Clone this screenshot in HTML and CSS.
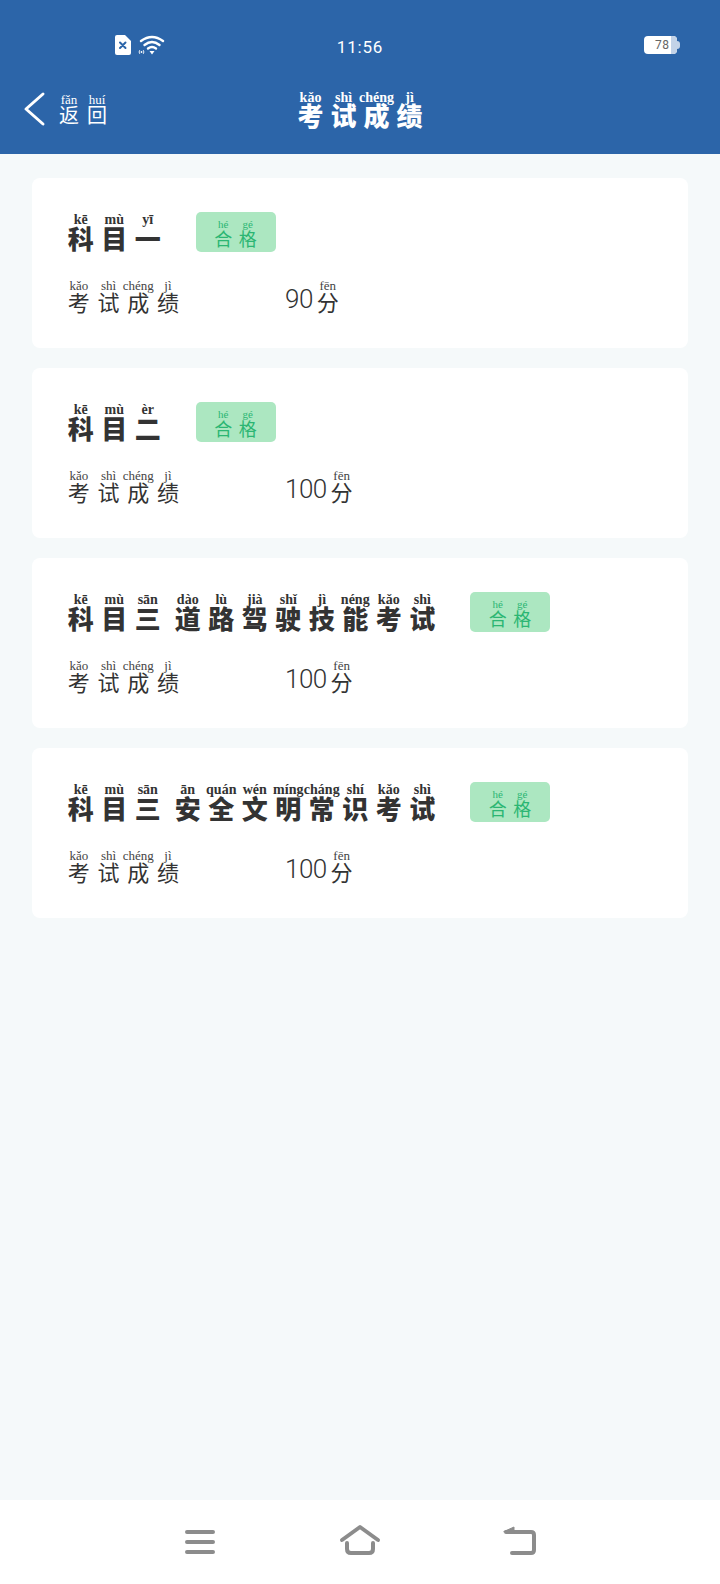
FILE: index.html
```html
<!DOCTYPE html>
<html lang="zh">
<head>
  <meta charset="UTF-8" />
  <meta name="viewport" content="width=device-width, initial-scale=1.0" />
  <title>考试成绩</title>
  <link rel="stylesheet" href="styles.css">
</head>
<body>
  <div class="page">
    <header class="top">
      <div class="status-bar">
        <div class="status-left">
          <svg class="sim-icon" width="18" height="22" viewBox="0 0 18 22">
            <path d="M3 1H11L17 7V19Q17 21 15 21H3Q1 21 1 19V3Q1 1 3 1Z" fill="#fff"/>
            <path d="M6 8.500L11.500 14M11.500 8.500L6 14" stroke="#2c65a9" stroke-width="2" stroke-linecap="round"/>
          </svg>
          <svg class="wifi-icon" width="27" height="20" viewBox="0 0 27 20" fill="none" stroke="#fff" stroke-linecap="round">
            <path d="M3 6Q14 -2 25 6" stroke-width="2.400"/>
            <path d="M6.500 10Q14 4 21.500 10" stroke-width="2.400"/>
            <path d="M10 13.500Q14 10.500 18 13.500" stroke-width="2.400"/>
            <path d="M11.500 16H16.500L14 19.500Z" fill="#fff" stroke="none"/>
            <circle cx="3.500" cy="17" r="0.900" fill="#fff" stroke="none"/>
            <path d="M1.500 15.500Q.5 17 1.500 18.500M5.500 15.500Q6.500 17 5.500 18.500" stroke-width="0.900"/>
          </svg>
        </div>
        <div class="clock">11:56</div>
        <div class="status-right">
          <div class="battery"><span class="battery-num">78</span><span class="battery-end"></span></div>
          <span class="battery-nub"></span>
        </div>
      </div>

      <div class="nav">
        <div class="back">
          <svg class="back-icon" width="24" height="36" viewBox="0 0 24 36" fill="none">
            <path d="M21 3L4 18L21 33" stroke="#fff" stroke-width="3" stroke-linecap="round" stroke-linejoin="round"/>
          </svg>
          <ruby class="ch-back">返<rt>fǎn</rt></ruby><ruby class="ch-back">回<rt>huí</rt></ruby>
        </div>
        <h1 class="nav-title">
          <ruby class="ch-head">考<rt>kǎo</rt></ruby><ruby class="ch-head">试<rt>shì</rt></ruby><ruby class="ch-head">成<rt>chéng</rt></ruby><ruby class="ch-head">绩<rt>jì</rt></ruby>
        </h1>
        <div></div>
      </div>
    </header>

    <main class="list">
      <section class="card">
        <div class="card-head">
          <div class="subject">
            <ruby>科<rt>kē</rt></ruby><ruby>目<rt>mù</rt></ruby><ruby>一<rt>yī</rt></ruby>
          </div>
          <div class="tag"><ruby>合<rt>hé</rt></ruby><ruby>格<rt>gé</rt></ruby></div>
        </div>
        <div class="score-row">
          <div class="score-label"><ruby>考<rt>kǎo</rt></ruby><ruby>试<rt>shì</rt></ruby><ruby>成<rt>chéng</rt></ruby><ruby>绩<rt>jì</rt></ruby></div>
          <div class="score-value"><span class="num">90</span><ruby>分<rt>fēn</rt></ruby></div>
        </div>
      </section>

      <section class="card">
        <div class="card-head">
          <div class="subject">
            <ruby>科<rt>kē</rt></ruby><ruby>目<rt>mù</rt></ruby><ruby>二<rt>èr</rt></ruby>
          </div>
          <div class="tag"><ruby>合<rt>hé</rt></ruby><ruby>格<rt>gé</rt></ruby></div>
        </div>
        <div class="score-row">
          <div class="score-label"><ruby>考<rt>kǎo</rt></ruby><ruby>试<rt>shì</rt></ruby><ruby>成<rt>chéng</rt></ruby><ruby>绩<rt>jì</rt></ruby></div>
          <div class="score-value"><span class="num">100</span><ruby>分<rt>fēn</rt></ruby></div>
        </div>
      </section>

      <section class="card">
        <div class="card-head">
          <div class="subject">
            <ruby>科<rt>kē</rt></ruby><ruby>目<rt>mù</rt></ruby><ruby>三<rt>sān</rt></ruby><ruby class="word-start">道<rt>dào</rt></ruby><ruby>路<rt>lù</rt></ruby><ruby>驾<rt>jià</rt></ruby><ruby>驶<rt>shǐ</rt></ruby><ruby>技<rt>jì</rt></ruby><ruby>能<rt>néng</rt></ruby><ruby>考<rt>kǎo</rt></ruby><ruby>试<rt>shì</rt></ruby>
          </div>
          <div class="tag"><ruby>合<rt>hé</rt></ruby><ruby>格<rt>gé</rt></ruby></div>
        </div>
        <div class="score-row">
          <div class="score-label"><ruby>考<rt>kǎo</rt></ruby><ruby>试<rt>shì</rt></ruby><ruby>成<rt>chéng</rt></ruby><ruby>绩<rt>jì</rt></ruby></div>
          <div class="score-value"><span class="num">100</span><ruby>分<rt>fēn</rt></ruby></div>
        </div>
      </section>

      <section class="card">
        <div class="card-head">
          <div class="subject">
            <ruby>科<rt>kē</rt></ruby><ruby>目<rt>mù</rt></ruby><ruby>三<rt>sān</rt></ruby><ruby class="word-start">安<rt>ān</rt></ruby><ruby>全<rt>quán</rt></ruby><ruby>文<rt>wén</rt></ruby><ruby>明<rt>míng</rt></ruby><ruby>常<rt>cháng</rt></ruby><ruby>识<rt>shí</rt></ruby><ruby>考<rt>kǎo</rt></ruby><ruby>试<rt>shì</rt></ruby>
          </div>
          <div class="tag"><ruby>合<rt>hé</rt></ruby><ruby>格<rt>gé</rt></ruby></div>
        </div>
        <div class="score-row">
          <div class="score-label"><ruby>考<rt>kǎo</rt></ruby><ruby>试<rt>shì</rt></ruby><ruby>成<rt>chéng</rt></ruby><ruby>绩<rt>jì</rt></ruby></div>
          <div class="score-value"><span class="num">100</span><ruby>分<rt>fēn</rt></ruby></div>
        </div>
      </section>
    </main>

    <footer class="bottom-bar">
      <svg width="48" height="34" viewBox="0 0 48 34" fill="none" stroke="#8c8c8c" stroke-width="4" stroke-linecap="round">
        <path d="M11 8H37M11 18H37M11 28H37"/>
      </svg>
      <svg width="48" height="34" viewBox="0 0 48 34" fill="none" stroke="#8c8c8c" stroke-width="4" stroke-linecap="round" stroke-linejoin="round">
        <path d="M6 16L24 3L42 16"/>
        <path d="M11 19V25Q11 29 15 29H33Q37 29 37 25V19"/>
      </svg>
      <svg width="48" height="34" viewBox="0 0 48 34" fill="none" stroke="#8c8c8c" stroke-width="4" stroke-linecap="round" stroke-linejoin="round">
        <path d="M10 8H35Q38 8 38 11V26Q38 29 35 29H16"/>
        <path d="M8 7.500L18 3V8Z" fill="#8c8c8c" stroke-width="1"/>
      </svg>
    </footer>
  </div>
</body>
</html>
```

FILE: styles.css
```css
body {
  margin: 0;
  background-color: #f5f9fa;
  color: #333;
  font-family: "Noto Sans CJK SC", "Noto Sans", sans-serif;
}

.page {
  display: flex;
  flex-direction: column;
  height: 100vh;
}

/* shared ruby layout */
ruby {
  display: inline-flex;
  flex-direction: column;
  align-items: center;
  flex-shrink: 0;
}

rt {
  display: block;
  order: -1;
  white-space: nowrap;
  font-family: "Liberation Serif", serif;
  text-align: center;
}

/* header */
.top {
  background-color: #2c65a9;
  color: white;
  height: 154px;
}

.status-bar {
  display: grid;
  grid-template-columns: 1fr auto 1fr;
  align-items: center;
  height: 76px;
  padding-top: 14px;
  box-sizing: border-box;
}

.status-left {
  display: flex;
  align-items: center;
  gap: 6px;
  padding-left: 114px;
}

.clock {
  margin-top: 3px;
  font-family: Roboto, sans-serif;
  font-size: 17px;
  letter-spacing: 0.800px;
}

.status-right {
  display: flex;
  align-items: center;
  justify-content: flex-end;
  padding-right: 40px;
}

.battery {
  display: flex;
  justify-content: space-between;
  width: 33px;
  height: 18px;
  background: white;
  border-radius: 4px;
  overflow: hidden;
}

.battery-num {
  padding-left: 11px;
  font-family: Roboto, sans-serif;
  font-size: 12px;
  line-height: 18px;
  letter-spacing: 0.500px;
  color: #666;
}

.battery-end {
  width: 6px;
  background: #c3d3e8;
}

.battery-nub {
  width: 3px;
  height: 8px;
  background: #c3d3e8;
  border-radius: 0 3px 3px 0;
}

.nav {
  display: grid;
  grid-template-columns: 1fr auto 1fr;
  padding-top: 17px;
}

.back {
  display: flex;
  align-items: flex-start;
  margin-top: -2px;
  padding-left: 22px;
}

.back-icon {
  margin-right: 9px;
}

.ch-back {
  width: 28px;
  margin-top: 3px;
  font-size: 20px;
  line-height: 18px;
}

.ch-back rt {
  font-size: 13px;
  line-height: 12px;
}

.nav-title {
  display: flex;
  margin: 0;
  font-size: 26px;
  font-weight: 900;
}

.ch-head {
  width: 33px;
  line-height: 24px;
}

.ch-head rt {
  font-size: 14px;
  font-weight: 700;
  line-height: 10px;
}

/* cards */
.list {
  flex: 1;
  display: flex;
  flex-direction: column;
  gap: 20px;
  padding: 24px 32px 0;
}

.card {
  background: white;
  border-radius: 8px;
  padding: 34px 32px 37px;
}

.card-head {
  display: flex;
  align-items: center;
  gap: 31px;
  height: 40px;
}

.subject {
  display: flex;
  font-size: 26px;
  font-weight: 900;
  color: #333;
}

.subject ruby {
  width: 33.500px;
  line-height: 25px;
}

.subject rt {
  font-size: 14px;
  font-weight: 700;
  line-height: 11px;
}

.word-start {
  margin-left: 6.500px;
}

.tag {
  display: flex;
  justify-content: center;
  align-items: center;
  width: 80px;
  height: 40px;
  background-color: #ace7c1;
  border-radius: 5px;
  color: #2bb673;
  font-size: 18px;
}

.tag ruby {
  width: 24.500px;
  line-height: 16px;
}

.tag rt {
  margin-bottom: 1px;
  font-size: 11px;
  line-height: 10px;
}

.score-row {
  display: flex;
  margin-top: 29px;
  font-size: 22px;
  color: #333;
}

.score-label {
  display: flex;
  width: 221px;
}

.score-label ruby,
.score-value ruby {
  width: 29.700px;
  line-height: 20px;
}

.score-label rt,
.score-value rt {
  font-size: 13px;
  line-height: 10px;
  color: #444;
}

.score-value {
  display: flex;
  align-items: flex-end;
}

.num {
  font-family: Roboto, sans-serif;
  font-size: 26px;
  font-weight: 300;
  line-height: 24px;
  letter-spacing: -0.500px;
}

/* bottom bar */
.bottom-bar {
  display: flex;
  justify-content: center;
  gap: 112px;
  height: 84px;
  padding-top: 24px;
  box-sizing: border-box;
  background: white;
}
```
